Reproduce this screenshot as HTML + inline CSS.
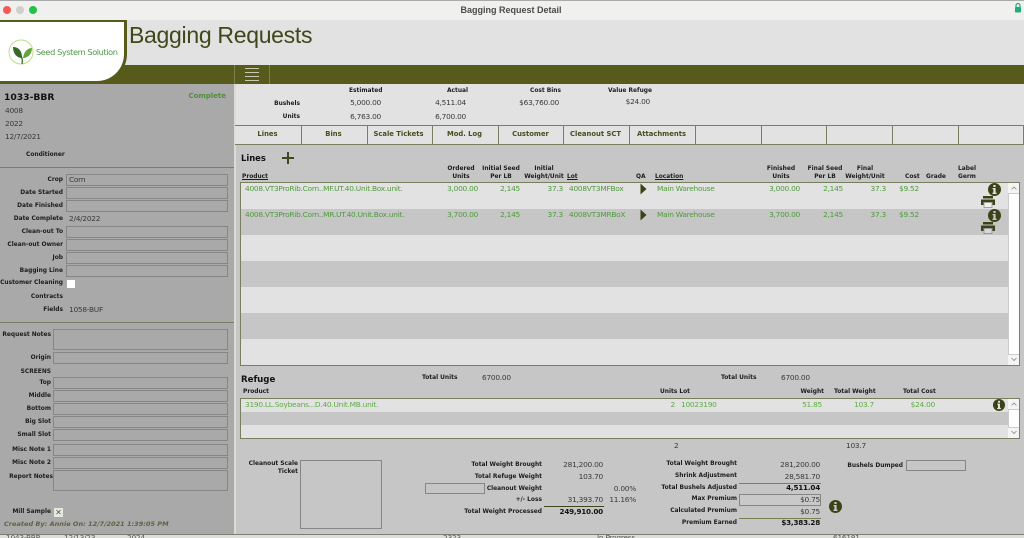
<!DOCTYPE html>
<html><head><meta charset="utf-8"><title>Bagging Request Detail</title>
<style>
html,body{margin:0;padding:0;width:1024px;height:538px;overflow:hidden;background:#ddd}
#p{position:relative;width:1024px;height:538px;overflow:hidden;font-family:"DejaVu Sans","Liberation Sans",sans-serif;font-size:7px;color:#333}
#p div,#p svg{position:absolute}
.l{font-weight:bold;font-size:5.9px;color:#1c1c1c;white-space:nowrap;line-height:8px}
.v{white-space:nowrap;line-height:10px;font-size:7.4px;letter-spacing:-.25px;color:#3a3a3a}
.g{white-space:nowrap;line-height:10px;font-size:7.4px;letter-spacing:-.25px;color:#4f9a3c}
.h{white-space:nowrap;line-height:10px;font-size:7.4px;letter-spacing:-.25px;color:#5cae42}
.n{font-weight:bold;color:#111;letter-spacing:-.2px;font-size:7.2px}
.b{font-weight:bold;font-size:7.4px;color:#111;white-space:nowrap;line-height:10px}
.f{box-sizing:border-box;border:1px solid #868686;background:#a9a9a9;height:12px}
.ft{font-weight:bold;font-size:6.8px;color:#474d1e;white-space:nowrap;text-align:center;line-height:19px;height:19px;top:125px;width:65px}
.s{width:1px;background:#76805f;top:125px;height:20px}
.c{text-align:center}
.sl{color:#555;clip-path:inset(2px 0 0 0);top:533px}
</style></head><body><div id="p">
<div style="left:0;top:0;width:1024px;height:20px;background:#f0f0ee;border-top:1px solid #aaa;box-sizing:border-box"></div>
<div style="left:3px;top:6px;width:8px;height:8px;border-radius:50%;background:#f25a56"></div>
<div style="left:16px;top:6px;width:8px;height:8px;border-radius:50%;background:#cfcfcf"></div>
<div style="left:29px;top:6px;width:8px;height:8px;border-radius:50%;background:#22c24a"></div>
<div style="left:0;width:1024px;top:5px;text-align:center;font-family:'Liberation Sans',sans-serif;font-weight:bold;font-size:9px;line-height:10px;color:#4a4a4a;padding-right:2px;box-sizing:border-box">Bagging Request Detail</div>
<svg style="left:1014px;top:3px" width="8" height="10" viewBox="0 0 8 10"><path d="M2 4V2.5a2 2 0 0 1 4 0V4" fill="none" stroke="#1fae7a" stroke-width="1.2"/><rect x="1" y="4" width="6" height="5.5" rx=".8" fill="#1fae7a"/></svg>

<div style="left:0;top:20px;width:1024px;height:45px;background:#e2e2e2"></div>
<div style="left:0;top:65px;width:1024px;height:19px;background:#565b1c"></div>
<div style="left:129px;top:21px;font-family:'Liberation Sans',sans-serif;font-size:23px;line-height:28px;color:#41471a;white-space:nowrap;letter-spacing:-.3px">Bagging Requests</div>
<div style="left:-3px;top:20px;width:130px;height:64px;box-sizing:border-box;border:3px solid #565b1c;border-top-width:2px;border-bottom-right-radius:30px;background:#fff"></div>
<svg style="left:7px;top:38px" width="30" height="28" viewBox="7 38 30 28"><circle cx="21" cy="52" r="12" fill="none" stroke="#bcdc8c" stroke-width="1"/><path d="M22 64C23 60 22 58 21 56" fill="none" stroke="#4d8a30" stroke-width="1.6"/><path d="M13 47C18 47 22 50 22 58 17 58 13 54 13 47Z" fill="#39682c"/><path d="M32 48C28 48 24 51 23 58 28 58 32 54 32 48Z" fill="#62a63a"/></svg>
<div style="left:36px;top:47px;font-size:8.2px;line-height:11px;color:#4f9a48;white-space:nowrap;letter-spacing:-.4px">Seed System Solution</div>
<div style="left:234px;top:65px;width:1px;height:19px;background:#7c8050"></div>
<div style="left:269px;top:65px;width:1px;height:19px;background:#7c8050"></div>
<div style="left:245px;top:68px;width:14px;height:1px;background:#c9c9ae"></div>
<div style="left:245px;top:72px;width:14px;height:1px;background:#c9c9ae"></div>
<div style="left:245px;top:76px;width:14px;height:1px;background:#c9c9ae"></div>
<div style="left:245px;top:80px;width:14px;height:1px;background:#c9c9ae"></div>

<!-- left panel -->
<div style="left:0;top:84px;width:234px;height:450px;background:#a9a9a9"></div>
<div style="left:234px;top:84px;width:2px;height:450px;background:#dcdcd4"></div>
<div style="left:0;top:167px;width:234px;height:1px;background:#76805f"></div>
<div style="left:0;top:322px;width:234px;height:1px;background:#76805f"></div>
<div style="left:0;top:534px;width:1024px;height:1px;background:#7c7f6a"></div>
<div style="left:4px;top:92px;font-weight:bold;font-size:9.2px;line-height:12px;color:#111;white-space:nowrap">1033-BBR</div>
<div style="right:798px;top:91px;font-weight:bold;font-size:7px;line-height:10px;color:#4f8f38">Complete</div>
<div class="v" style="left:5px;top:106px">4008</div>
<div class="v" style="left:5px;top:119px">2022</div>
<div class="v" style="left:5px;top:132px">12/7/2021</div>
<div class="l" style="left:26px;top:151px">Conditioner</div>

<div class="l" style="right:961px;top:176px">Crop</div><div class="f" style="left:66px;top:174px;width:162px"></div><div class="v" style="left:69px;top:175px">Corn</div>
<div class="l" style="right:961px;top:189px">Date Started</div><div class="f" style="left:66px;top:187px;width:162px"></div>
<div class="l" style="right:961px;top:202px">Date Finished</div><div class="f" style="left:66px;top:200px;width:162px"></div>
<div class="l" style="right:961px;top:215px">Date Complete</div><div class="v" style="left:69px;top:214px">2/4/2022</div>
<div class="l" style="right:961px;top:228px">Clean-out To</div><div class="f" style="left:66px;top:226px;width:162px"></div>
<div class="l" style="right:961px;top:241px">Clean-out Owner</div><div class="f" style="left:66px;top:239px;width:162px"></div>
<div class="l" style="right:961px;top:254px">Job</div><div class="f" style="left:66px;top:252px;width:162px"></div>
<div class="l" style="right:961px;top:267px">Bagging Line</div><div class="f" style="left:66px;top:265px;width:162px"></div>
<div class="l" style="right:961px;top:279px">Customer Cleaning</div><div style="left:67px;top:280px;width:8px;height:8px;background:#fff"></div>
<div class="l" style="right:961px;top:293px">Contracts</div>
<div class="l" style="right:961px;top:306px">Fields</div><div class="v" style="left:69px;top:305px">1058-BUF</div>

<div class="l" style="right:973px;top:331px">Request Notes</div><div class="f" style="left:53px;top:329px;width:175px;height:21px"></div>
<div class="l" style="right:973px;top:354px">Origin</div><div class="f" style="left:53px;top:352px;width:175px"></div>
<div class="l" style="right:973px;top:368px">SCREENS</div>
<div class="l" style="right:973px;top:379px">Top</div><div class="f" style="left:53px;top:377px;width:175px"></div>
<div class="l" style="right:973px;top:392px">Middle</div><div class="f" style="left:53px;top:390px;width:175px"></div>
<div class="l" style="right:973px;top:405px">Bottom</div><div class="f" style="left:53px;top:403px;width:175px"></div>
<div class="l" style="right:973px;top:418px">Big Slot</div><div class="f" style="left:53px;top:416px;width:175px"></div>
<div class="l" style="right:973px;top:431px">Small Slot</div><div class="f" style="left:53px;top:429px;width:175px"></div>
<div class="l" style="right:973px;top:446px">Misc Note 1</div><div class="f" style="left:53px;top:444px;width:175px"></div>
<div class="l" style="right:973px;top:459px">Misc Note 2</div><div class="f" style="left:53px;top:457px;width:175px"></div>
<div class="l" style="right:971px;top:473px">Report Notes</div><div class="f" style="left:53px;top:470px;width:175px;height:21px"></div>
<div class="l" style="right:973px;top:508px">Mill Sample</div>
<div style="left:54px;top:508px;width:9px;height:9px;background:#e8e8e0;color:#2f6b45;font-size:8px;line-height:9px;text-align:center">&#10005;</div>
<div style="left:4px;top:520px;font-weight:bold;font-style:italic;font-size:6.55px;line-height:8px;color:#5f6240;white-space:nowrap">Created By: Annie On: 12/7/2021 1:39:05 PM</div>

<!-- summary -->
<div style="left:236px;top:84px;width:788px;height:41px;background:#e2e2e2"></div>
<div class="l" style="left:349px;top:87px">Estimated</div>
<div class="l" style="right:724px;top:100px">Bushels</div><div class="l" style="right:724px;top:113px">Units</div>
<div class="l" style="left:447px;top:87px">Actual</div><div class="l" style="left:530px;top:87px">Cost Bins</div><div class="l" style="left:608px;top:87px">Value Refuge</div>
<div class="v" style="right:643px;top:98px">5,000.00</div><div class="v" style="right:643px;top:112px">6,763.00</div>
<div class="v" style="right:558px;top:98px">4,511.04</div><div class="v" style="right:558px;top:112px">6,700.00</div>
<div class="v" style="right:465px;top:98px">$63,760.00</div><div class="v" style="right:374px;top:97px">$24.00</div>

<!-- tabs -->
<div style="left:235px;top:125px;width:789px;height:20px;background:#e2e2e2;border-top:1px solid #76805f;border-bottom:1px solid #76805f;box-sizing:border-box"></div>
<div class="s" style="left:301px"></div><div class="s" style="left:367px"></div><div class="s" style="left:432px"></div><div class="s" style="left:498px"></div><div class="s" style="left:563px"></div><div class="s" style="left:629px"></div><div class="s" style="left:695px"></div><div class="s" style="left:761px"></div><div class="s" style="left:826px"></div><div class="s" style="left:892px"></div><div class="s" style="left:958px"></div><div class="s" style="left:1023px"></div>
<div class="ft" style="left:235px">Lines</div><div class="ft" style="left:301px">Bins</div><div class="ft" style="left:366px">Scale Tickets</div><div class="ft" style="left:432px">Mod. Log</div><div class="ft" style="left:498px">Customer</div><div class="ft" style="left:563px">Cleanout SCT</div><div class="ft" style="left:629px">Attachments</div>

<!-- main -->
<div style="left:236px;top:145px;width:788px;height:389px;background:#c6c6c6"></div>
<div class="b" style="left:241px;top:153px;font-size:8.4px">Lines</div>
<div style="left:282px;top:157px;width:12px;height:2px;background:#41471a"></div><div style="left:287px;top:152px;width:2px;height:12px;background:#41471a"></div>
<div class="l" style="left:242px;top:173px;text-decoration:underline">Product</div>
<div class="l c" style="left:441px;top:165px;width:40px">Ordered<br>Units</div>
<div class="l c" style="left:476px;top:165px;width:50px">Initial Seed<br>Per LB</div>
<div class="l c" style="left:519px;top:165px;width:50px">Initial<br>Weight/Unit</div>
<div class="l" style="left:567px;top:173px;text-decoration:underline">Lot</div>
<div class="l" style="left:636px;top:173px">QA</div>
<div class="l" style="left:655px;top:173px;text-decoration:underline">Location</div>
<div class="l c" style="left:761px;top:165px;width:40px">Finished<br>Units</div>
<div class="l c" style="left:800px;top:165px;width:50px">Final Seed<br>Per LB</div>
<div class="l c" style="left:840px;top:165px;width:50px">Final<br>Weight/Unit</div>
<div class="l" style="left:905px;top:173px">Cost</div><div class="l" style="left:926px;top:173px">Grade</div>
<div class="l" style="left:958px;top:165px">Label<br>Germ</div>

<div style="left:240px;top:182px;width:780px;height:184px;box-sizing:border-box;border:1px solid #76805f;background:#e2e2e2"></div>
<div style="left:241px;top:209px;width:767px;height:26px;background:#c6c6c6"></div>
<div style="left:241px;top:261px;width:767px;height:26px;background:#c6c6c6"></div>
<div style="left:241px;top:313px;width:767px;height:26px;background:#c6c6c6"></div>
<div style="left:1008px;top:183px;width:11px;height:182px;background:#fff;border-left:1px solid #ccc;box-sizing:border-box"></div>
<div style="left:1008px;top:183px;width:11px;height:11px;background:#f4f4f4;border-bottom:1px solid #ccc;box-sizing:border-box"></div>
<svg style="left:1011px;top:186px" width="6" height="5" viewBox="0 0 6 5"><path d="M.5 3.5 3 1 5.5 3.5" fill="none" stroke="#888" stroke-width=".8"/></svg>
<div style="left:1008px;top:354px;width:11px;height:11px;background:#f4f4f4;border-top:1px solid #ccc;box-sizing:border-box"></div>
<svg style="left:1011px;top:357px" width="6" height="5" viewBox="0 0 6 5"><path d="M.5 1 3 3.5 5.5 1" fill="none" stroke="#888" stroke-width=".8"/></svg>

<div class="g" style="left:245px;top:184px">4008.VT3ProRib.Corn..MF.UT.40.Unit.Box.unit.</div>
<div class="g" style="right:546px;top:184px">3,000.00</div><div class="g" style="right:504px;top:184px">2,145</div><div class="g" style="right:461px;top:184px">37.3</div><div class="g" style="left:569px;top:184px">4008VT3MFBox</div>
<div class="g" style="left:657px;top:184px">Main Warehouse</div><div class="g" style="right:224px;top:184px">3,000.00</div><div class="g" style="right:181px;top:184px">2,145</div><div class="g" style="right:138px;top:184px">37.3</div><div class="g" style="left:899px;top:184px">$9.52</div>
<div class="g" style="left:245px;top:210px">4008.VT3ProRib.Corn..MR.UT.40.Unit.Box.unit.</div>
<div class="g" style="right:546px;top:210px">3,700.00</div><div class="g" style="right:504px;top:210px">2,145</div><div class="g" style="right:461px;top:210px">37.3</div><div class="g" style="left:569px;top:210px">4008VT3MRBoX</div>
<div class="g" style="left:657px;top:210px">Main Warehouse</div><div class="g" style="right:224px;top:210px">3,700.00</div><div class="g" style="right:181px;top:210px">2,145</div><div class="g" style="right:138px;top:210px">37.3</div><div class="g" style="left:899px;top:210px">$9.52</div>

<svg style="left:640px;top:183px" width="7" height="12" viewBox="0 0 7 12"><path d="M.5 .5 6.5 6 .5 11.5Z" fill="#3c4216"/></svg>
<svg style="left:640px;top:209px" width="7" height="12" viewBox="0 0 7 12"><path d="M.5 .5 6.5 6 .5 11.5Z" fill="#3c4216"/></svg>
<svg style="left:988px;top:183px" width="13" height="13" viewBox="0 0 13 13"><circle cx="6.5" cy="6.5" r="6.5" fill="#3c4216"/><rect x="5.4" y="2" width="2.2" height="2" fill="#e2e2e2"/><path d="M4.6 5H7.6V9.6H8.6V11H4.5V9.6H5.4V6.2H4.6Z" fill="#e2e2e2"/></svg>
<svg style="left:988px;top:209px" width="13" height="13" viewBox="0 0 13 13"><circle cx="6.5" cy="6.5" r="6.5" fill="#3c4216"/><rect x="5.4" y="2" width="2.2" height="2" fill="#c6c6c6"/><path d="M4.6 5H7.6V9.6H8.6V11H4.5V9.6H5.4V6.2H4.6Z" fill="#c6c6c6"/></svg>
<svg style="left:981px;top:196px" width="14" height="12" viewBox="0 0 14 12"><rect x="2" y="0" width="10" height="2.5" fill="#3c4216"/><path d="M0 3.5H14V9H11.5V6H2.5V9H0Z" fill="#3c4216"/><rect x="3" y="6.5" width="8" height="5" fill="#f0f0f0" stroke="#777" stroke-width=".6"/></svg>
<svg style="left:981px;top:222px" width="14" height="12" viewBox="0 0 14 12"><rect x="2" y="0" width="10" height="2.5" fill="#3c4216"/><path d="M0 3.5H14V9H11.5V6H2.5V9H0Z" fill="#3c4216"/><rect x="3" y="6.5" width="8" height="5" fill="#d8d8d8" stroke="#777" stroke-width=".6"/></svg>

<!-- refuge -->
<div class="b" style="left:241px;top:375px;font-size:8.6px">Refuge</div>
<div class="l" style="left:422px;top:374px">Total Units</div><div class="v" style="left:482px;top:373px">6700.00</div>
<div class="l" style="left:721px;top:374px">Total Units</div><div class="v" style="left:781px;top:373px">6700.00</div>
<div class="l" style="left:243px;top:388px">Product</div>
<div class="l" style="left:660px;top:388px">Units Lot</div><div class="l" style="right:200px;top:388px">Weight</div><div class="l" style="left:834px;top:388px">Total Weight</div><div class="l" style="left:903px;top:388px">Total Cost</div>
<div style="left:240px;top:398px;width:780px;height:41px;box-sizing:border-box;border:1px solid #76805f;background:#e2e2e2"></div>
<div style="left:241px;top:412px;width:767px;height:13px;background:#c6c6c6"></div>
<div style="left:1008px;top:399px;width:11px;height:39px;background:#fff;border-left:1px solid #ccc;box-sizing:border-box"></div>
<div style="left:1008px;top:399px;width:11px;height:11px;background:#f4f4f4;border-bottom:1px solid #ccc;box-sizing:border-box"></div>
<svg style="left:1011px;top:402px" width="6" height="5" viewBox="0 0 6 5"><path d="M.5 3.5 3 1 5.5 3.5" fill="none" stroke="#888" stroke-width=".8"/></svg>
<div style="left:1008px;top:427px;width:11px;height:11px;background:#f4f4f4;border-top:1px solid #ccc;box-sizing:border-box"></div>
<svg style="left:1011px;top:430px" width="6" height="5" viewBox="0 0 6 5"><path d="M.5 1 3 3.5 5.5 1" fill="none" stroke="#888" stroke-width=".8"/></svg>
<div class="h" style="left:245px;top:400px">3190.LL.Soybeans...D.40.Unit.MB.unit.</div>
<div class="h" style="right:349px;top:400px">2</div><div class="h" style="left:681px;top:400px">10023190</div><div class="h" style="right:202px;top:400px">51.85</div><div class="h" style="right:150px;top:400px">103.7</div><div class="h" style="right:89px;top:400px">$24.00</div>
<svg style="left:993px;top:399px" width="12" height="12" viewBox="0 0 13 13"><circle cx="6.5" cy="6.5" r="6.5" fill="#3c4216"/><rect x="5.4" y="2" width="2.2" height="2" fill="#e2e2e2"/><path d="M4.6 5H7.6V9.6H8.6V11H4.5V9.6H5.4V6.2H4.6Z" fill="#e2e2e2"/></svg>
<div class="v" style="left:674px;top:441px">2</div><div class="v" style="left:846px;top:441px">103.7</div>

<!-- bottom -->
<div class="l" style="right:726px;top:460px;text-align:right">Cleanout Scale<br>Ticket</div>
<div style="left:300px;top:460px;width:82px;height:69px;box-sizing:border-box;border:1px solid #868686;background:#c6c6c6"></div>
<div class="l" style="right:482px;top:461px">Total Weight Brought</div><div class="v" style="right:421px;top:460px">281,200.00</div>
<div class="l" style="right:482px;top:473px">Total Refuge Weight</div><div class="v" style="right:421px;top:472px">103.70</div>
<div style="left:425px;top:483px;width:60px;height:11px;box-sizing:border-box;border:1px solid #868686;background:#c6c6c6"></div>
<div class="l" style="right:482px;top:485px">Cleanout Weight</div><div class="v" style="right:388px;top:484px">0.00%</div>
<div class="l" style="right:482px;top:496px">+/- Loss</div><div class="v" style="right:421px;top:495px">31,393.70</div><div class="v" style="right:388px;top:495px">11.16%</div>
<div style="left:544px;top:506px;width:60px;height:1px;background:#41471a"></div>
<div class="l" style="right:482px;top:508px">Total Weight Processed</div><div class="v n" style="right:421px;top:507px">249,910.00</div>

<div class="l" style="right:287px;top:460px">Total Weight Brought</div><div class="v" style="right:204px;top:460px">281,200.00</div>
<div class="l" style="right:287px;top:472px">Shrink Adjustment</div><div class="v" style="right:204px;top:472px">28,581.70</div>
<div style="left:739px;top:483px;width:82px;height:1px;background:#7c8050"></div>
<div class="l" style="right:287px;top:484px">Total Bushels Adjusted</div><div class="v n" style="right:204px;top:483px">4,511.04</div>
<div class="l" style="right:287px;top:495px">Max Premium</div>
<div class="f" style="left:739px;top:494px;width:82px;background:#c9c9c9"></div><div class="v" style="right:204px;top:495px">$0.75</div>
<div class="l" style="right:287px;top:507px">Calculated Premium</div><div class="v" style="right:204px;top:507px">$0.75</div>
<div style="left:739px;top:518px;width:82px;height:1px;background:#7c8050"></div>
<div class="l" style="right:287px;top:519px">Premium Earned</div><div class="v n" style="right:204px;top:518px">$3,383.28</div>
<svg style="left:829px;top:500px" width="13" height="13" viewBox="0 0 13 13"><circle cx="6.5" cy="6.5" r="6.5" fill="#3c4216"/><rect x="5.4" y="2" width="2.2" height="2" fill="#c6c6c6"/><path d="M4.6 5H7.6V9.6H8.6V11H4.5V9.6H5.4V6.2H4.6Z" fill="#c6c6c6"/></svg>
<div class="l" style="right:121px;top:462px">Bushels Dumped</div><div class="f" style="left:906px;top:460px;width:60px;height:11px;background:#c6c6c6"></div>

<!-- bottom sliver of scrolled text -->
<div class="v sl" style="left:6px">1043-BBR</div>
<div class="v sl" style="left:64px">12/13/23</div>
<div class="v sl" style="left:127px">2024</div>
<div class="v sl" style="left:443px">2323</div>
<div class="v sl" style="left:597px">In Progress</div>
<div class="v sl" style="left:833px">616181</div>
</div></body></html>
